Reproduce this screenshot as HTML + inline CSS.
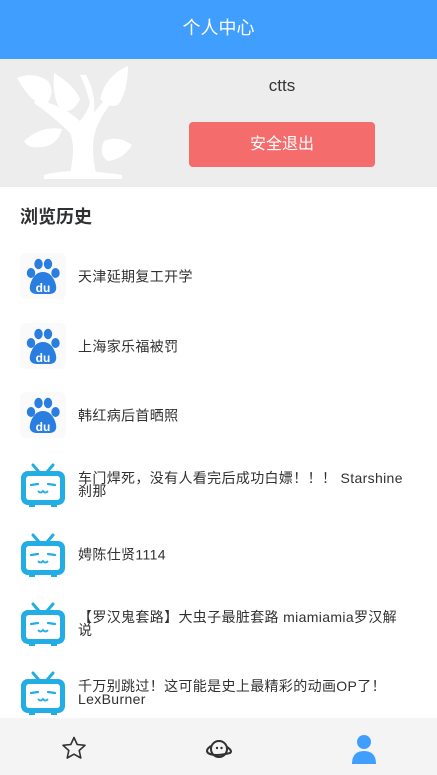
<!DOCTYPE html>
<html><head><meta charset="utf-8"><style>
*{margin:0;padding:0;box-sizing:border-box}
body{width:437px;height:775px;overflow:hidden;font-family:"Liberation Sans","Noto Sans CJK SC",sans-serif;background:#fff;position:relative}
.hd{height:59px;background:#409eff;color:#fff;font-size:18px;text-align:center;line-height:57px}
.pf{height:128px;background:#ededed;position:relative}
.name{position:absolute;left:189px;width:186px;top:17px;text-align:center;font-size:17px;color:#333}
.btn{position:absolute;left:189px;top:63px;width:186px;height:45px;background:#f56c6c;border-radius:4px;color:#fff;font-size:16px;text-align:center;line-height:45px}
.t{position:absolute;left:20px;top:203px;font-size:18px;font-weight:bold;color:#303133}
.it{position:absolute;left:20px;width:400px;height:48px}
.it svg{position:absolute;left:0;top:0}
.it span{position:absolute;left:58px;width:340px;top:50%;transform:translateY(-50%);font-size:14px;line-height:13px;color:#303133;letter-spacing:0.35px}
.ft{position:absolute;left:0;top:718px;width:437px;height:57px;background:#f4f4f4}
</style></head><body>
<div class="hd">个人中心</div>
<div class="pf">
<svg style="position:absolute;left:14px;top:4px" width="118" height="118" viewBox="0 0 118 118" fill="#fff">
<path d="M3 15 Q20 8 34 18 Q42 30 32 42 Q18 42 3 15Z"/>
<path d="M40 10 Q60 22 66 36 Q60 50 48 48 Q38 38 40 10Z"/>
<path d="M114 3 Q114 28 104 42 Q94 46 86 36 Q92 12 114 3Z"/>
<path d="M10 78 Q28 62 48 66 Q44 82 28 84 Q14 86 10 78Z"/>
<path d="M118 82 Q110 96 94 98 Q84 92 90 78 Q104 72 118 82Z"/>
<path d="M22 36 Q48 42 66 58 Q74 48 76 40 Q72 24 66 12 L72 12 Q82 30 80 50 Q90 36 100 30 L102 34 Q88 50 82 66 Q76 84 82 110 L56 110 Q62 84 56 70 Q40 54 20 40Z"/>
<path d="M30 112 Q58 104 108 112 L108 116 L30 116Z"/>
</svg>
<div class="name">ctts</div>
<div class="btn">安全退出</div>
</div>
<div class="t">浏览历史</div>
<svg width="0" height="0" style="position:absolute"><defs>
<g id="bd"><rect width="46" height="46" rx="6" fill="#fafafa"/>
<ellipse cx="11" cy="20" rx="4.2" ry="5" fill="#2a7ee0"/><ellipse cx="18.5" cy="11" rx="4.2" ry="5.2" fill="#2a7ee0"/><ellipse cx="28" cy="11" rx="4.2" ry="5.2" fill="#2a7ee0"/><ellipse cx="35.5" cy="20" rx="4.2" ry="5" fill="#2a7ee0"/>
<path d="M23 19 Q15 19 11 29 Q7 40 16 41 L30 41 Q39 40 35 29 Q31 19 23 19Z" fill="#2a7ee0"/>
<text x="23" y="39" font-size="12" font-weight="bold" fill="#fff" text-anchor="middle" font-family="Liberation Sans">du</text></g>
<g id="bl"><path d="M13 4 L19 11 M33 4 L27 11" stroke="#23ade5" stroke-width="3" stroke-linecap="round"/>
<rect x="1" y="10" width="44" height="34" rx="7" fill="#23ade5"/><rect x="6" y="15" width="34" height="24" rx="3" fill="#fff"/>
<path d="M11 24 L18 23 M28 23 L35 24" stroke="#23ade5" stroke-width="2.2" stroke-linecap="round"/>
<path d="M18 30 Q20.5 33 23 30 Q25.5 33 28 30" stroke="#23ade5" stroke-width="1.8" fill="none"/>
<rect x="9" y="43" width="6" height="3" fill="#23ade5"/><rect x="31" y="43" width="6" height="3" fill="#23ade5"/></g>
</defs></svg>
<div class="it" style="top:253px"><svg width="46" height="48"><use href="#bd"/></svg><span>天津延期复工开学</span></div>
<div class="it" style="top:323px"><svg width="46" height="48"><use href="#bd"/></svg><span>上海家乐福被罚</span></div>
<div class="it" style="top:392px"><svg width="46" height="48"><use href="#bd"/></svg><span>韩红病后首晒照</span></div>
<div class="it" style="top:461px"><svg width="46" height="48"><use href="#bl"/></svg><span>车门焊死，没有人看完后成功白嫖！！！ Starshine<br>刹那</span></div>
<div class="it" style="top:531px"><svg width="46" height="48"><use href="#bl"/></svg><span>娉陈仕贤1114</span></div>
<div class="it" style="top:600px"><svg width="46" height="48"><use href="#bl"/></svg><span>【罗汉鬼套路】大虫子最脏套路 miamiamia罗汉解<br>说</span></div>
<div class="it" style="top:669px"><svg width="46" height="48"><use href="#bl"/></svg><span>千万别跳过！这可能是史上最精彩的动画OP了！<br>LexBurner</span></div>
<div class="ft">
<svg style="position:absolute;left:61px;top:18px" width="26" height="24" viewBox="0 0 26 24"><path d="M13 1.5 L16.2 8.5 L24 9.3 L18.2 14.5 L19.8 22 L13 18.2 L6.2 22 L7.8 14.5 L2 9.3 L9.8 8.5Z" fill="none" stroke="#303133" stroke-width="1.6" stroke-linejoin="round"/></svg>
<svg style="position:absolute;left:204px;top:20px" width="30" height="22" viewBox="0 0 30 22"><circle cx="15" cy="11" r="8" fill="none" stroke="#303133" stroke-width="2"/><path d="M7 8 Q1 12 4 15 Q10 19 26 15 Q29 13 23 9" fill="none" stroke="#303133" stroke-width="2"/><circle cx="13" cy="10" r="1.2" fill="#303133"/><circle cx="17.5" cy="10" r="1.2" fill="#303133"/></svg>
<svg style="position:absolute;left:352px;top:16px" width="24" height="30" viewBox="0 0 24 30"><circle cx="12" cy="8" r="7" fill="#409eff"/><path d="M0 30 Q0 17 12 17 Q24 17 24 30Z" fill="#409eff"/></svg>
</div>
</body></html>
